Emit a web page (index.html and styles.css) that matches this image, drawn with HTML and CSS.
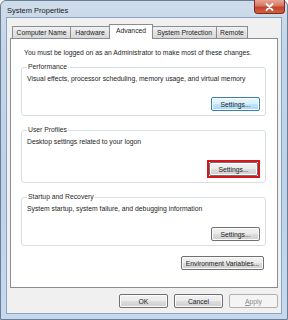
FILE: index.html
```html
<!DOCTYPE html>
<html lang="en">
<head>
    <meta charset="UTF-8">
    <title>System Properties</title>
    <link rel="stylesheet" href="styles.css">
</head>
<body>
    <div class="window">
        <div class="titlebar">
            <span class="title">System Properties</span>
            <button class="close" type="button">
                <svg width="9" height="8" viewBox="0 0 9 8"><path d="M1.5 1 L7.5 7 M7.5 1 L1.5 7" stroke="#fff" stroke-width="1.8" stroke-linecap="round"/></svg>
            </button>
        </div>
        <div class="client">
            <div class="tabs">
                <div class="tab t-name">Computer Name</div>
                <div class="tab t-hw">Hardware</div>
                <div class="tab t-adv active">Advanced</div>
                <div class="tab t-sys">System Protection</div>
                <div class="tab t-rem">Remote</div>
            </div>
            <div class="panel">
                <p class="notice">You must be logged on as an Administrator to make most of these changes.</p>

                <fieldset class="group">
                    <legend>Performance</legend>
                    <p class="desc">Visual effects, processor scheduling, memory usage, and virtual memory</p>
                    <div class="row-end"><button type="button" class="btn default">Settings...</button></div>
                </fieldset>

                <fieldset class="group">
                    <legend>User Profiles</legend>
                    <p class="desc">Desktop settings related to your logon</p>
                    <div class="row-end"><span class="mark"><button type="button" class="btn">Settings...</button></span></div>
                </fieldset>

                <fieldset class="group">
                    <legend>Startup and Recovery</legend>
                    <p class="desc">System startup, system failure, and debugging information</p>
                    <div class="row-end"><button type="button" class="btn">Settings...</button></div>
                </fieldset>

                <div class="env"><button type="button" class="btn wide">Environment Variables...</button></div>
            </div>
            <div class="footer">
                <button type="button" class="btn">OK</button>
                <button type="button" class="btn">Cancel</button>
                <button type="button" class="btn" disabled><u>A</u>pply</button>
            </div>
        </div>
    </div>
</body>
</html>
```

FILE: styles.css
```css
body {
    margin: 0;
    padding: 0;
    background-color: #ffffff;
    font-family: "Liberation Sans", Arial, sans-serif;
    font-size: 6.8px;
    color: #1e1e1e;
}
.window {
    width: 288px;
    height: 320px;
    box-sizing: border-box;
    display: flex;
    flex-direction: column;
    padding: 0 5px 5px;
    border: 1px solid #6d7e92;
    border-radius: 6px 6px 0 0;
    background: linear-gradient(180deg, #cfdcea 0%, #c2d5ea 15%, #bdd3eb 60%, #c5d9ee 100%);
}
.titlebar {
    height: 16px;
    display: flex;
    align-items: flex-start;
    justify-content: space-between;
}
.title {
    margin-top: 5px;
    padding-left: 1px;
    font-size: 7.5px;
    color: #1b1b1b;
}
.close {
    width: 31px;
    height: 14px;
    margin-top: -1px;
    margin-right: -3px;
    padding: 0;
    display: flex;
    align-items: center;
    justify-content: center;
    border: 1px solid #7a2a20;
    border-top: none;
    border-radius: 0 0 4px 4px;
    background: linear-gradient(180deg, #e8a493 0%, #d47664 45%, #c2432b 55%, #d5603d 100%);
}
.client {
    flex: 1;
    display: flex;
    flex-direction: column;
    background-color: #f0f0f0;
    border: 1px solid #8ea4bd;
    padding: 0 3px 0 3px;
}
.tabs {
    display: flex;
    align-items: flex-end;
    height: 20px;
    padding-left: 2px;
    position: relative;
    z-index: 1;
}
.tab {
    height: 12px;
    line-height: 11px;
    box-sizing: border-box;
    text-align: center;
    border: 1px solid #8c8c8c;
    border-bottom: none;
    border-right: none;
    background: linear-gradient(180deg, #f2f2f2 0%, #e3e3e3 50%, #d8d8d8 100%);
}
.t-name { width: 58px; }
.t-hw { width: 39px; }
.t-adv { width: 44px; }
.t-sys { width: 63px; }
.t-rem { width: 32px; border-right: 1px solid #8c8c8c; }
.tab.active {
    height: 15px;
    line-height: 12px;
    background: #ffffff;
    border-right: 1px solid #8c8c8c;
    margin-bottom: -1px;
    padding-bottom: 1px;
}
.tab.active + .tab { border-left: none; }
.panel {
    height: 250px;
    box-sizing: border-box;
    background-color: #ffffff;
    border: 1px solid #898c95;
    padding: 9px 11px 0 10px;
    display: flex;
    flex-direction: column;
}
.notice {
    margin: 0 0 5px 3px;
    line-height: 10px;
}
.group {
    margin: 0 0 10px 0;
    padding: 3px 5px 4px 5px;
    border: 1px solid #d5dfe5;
    border-radius: 3px;
}
.group legend {
    padding: 0 1px;
    color: #2b2b2b;
    line-height: 8px;
}
.desc {
    margin: 0;
    line-height: 10px;
}
.row-end {
    display: flex;
    justify-content: flex-end;
    margin-top: 13px;
}
.btn {
    width: 49px;
    height: 14px;
    padding: 0;
    font-family: "Liberation Sans", Arial, sans-serif;
    font-size: 6.8px;
    color: #1e1e1e;
    border: 1px solid #707070;
    border-radius: 2px;
    background: linear-gradient(180deg, #f2f2f2 0%, #ebebeb 48%, #dddddd 52%, #cfcfcf 100%);
    box-shadow: inset 0 0 0 1px #fbfbfb;
}
.btn.default {
    border-color: #3c7fb1;
    background: linear-gradient(180deg, #eaf6fd 0%, #d9f0fc 48%, #bee6fd 52%, #a7d9f5 100%);
}
.btn:disabled {
    color: #8d8d8d;
    border-color: #adb2b5;
    background: #f4f4f4;
    box-shadow: none;
}
.mark {
    display: flex;
    border: 2px solid #d9141b;
}
.env {
    display: flex;
    justify-content: flex-end;
    margin-right: 2px;
}
.wide { width: 83px; }
.footer {
    display: flex;
    justify-content: flex-end;
    gap: 6px;
    padding-top: 6px;
}
```
